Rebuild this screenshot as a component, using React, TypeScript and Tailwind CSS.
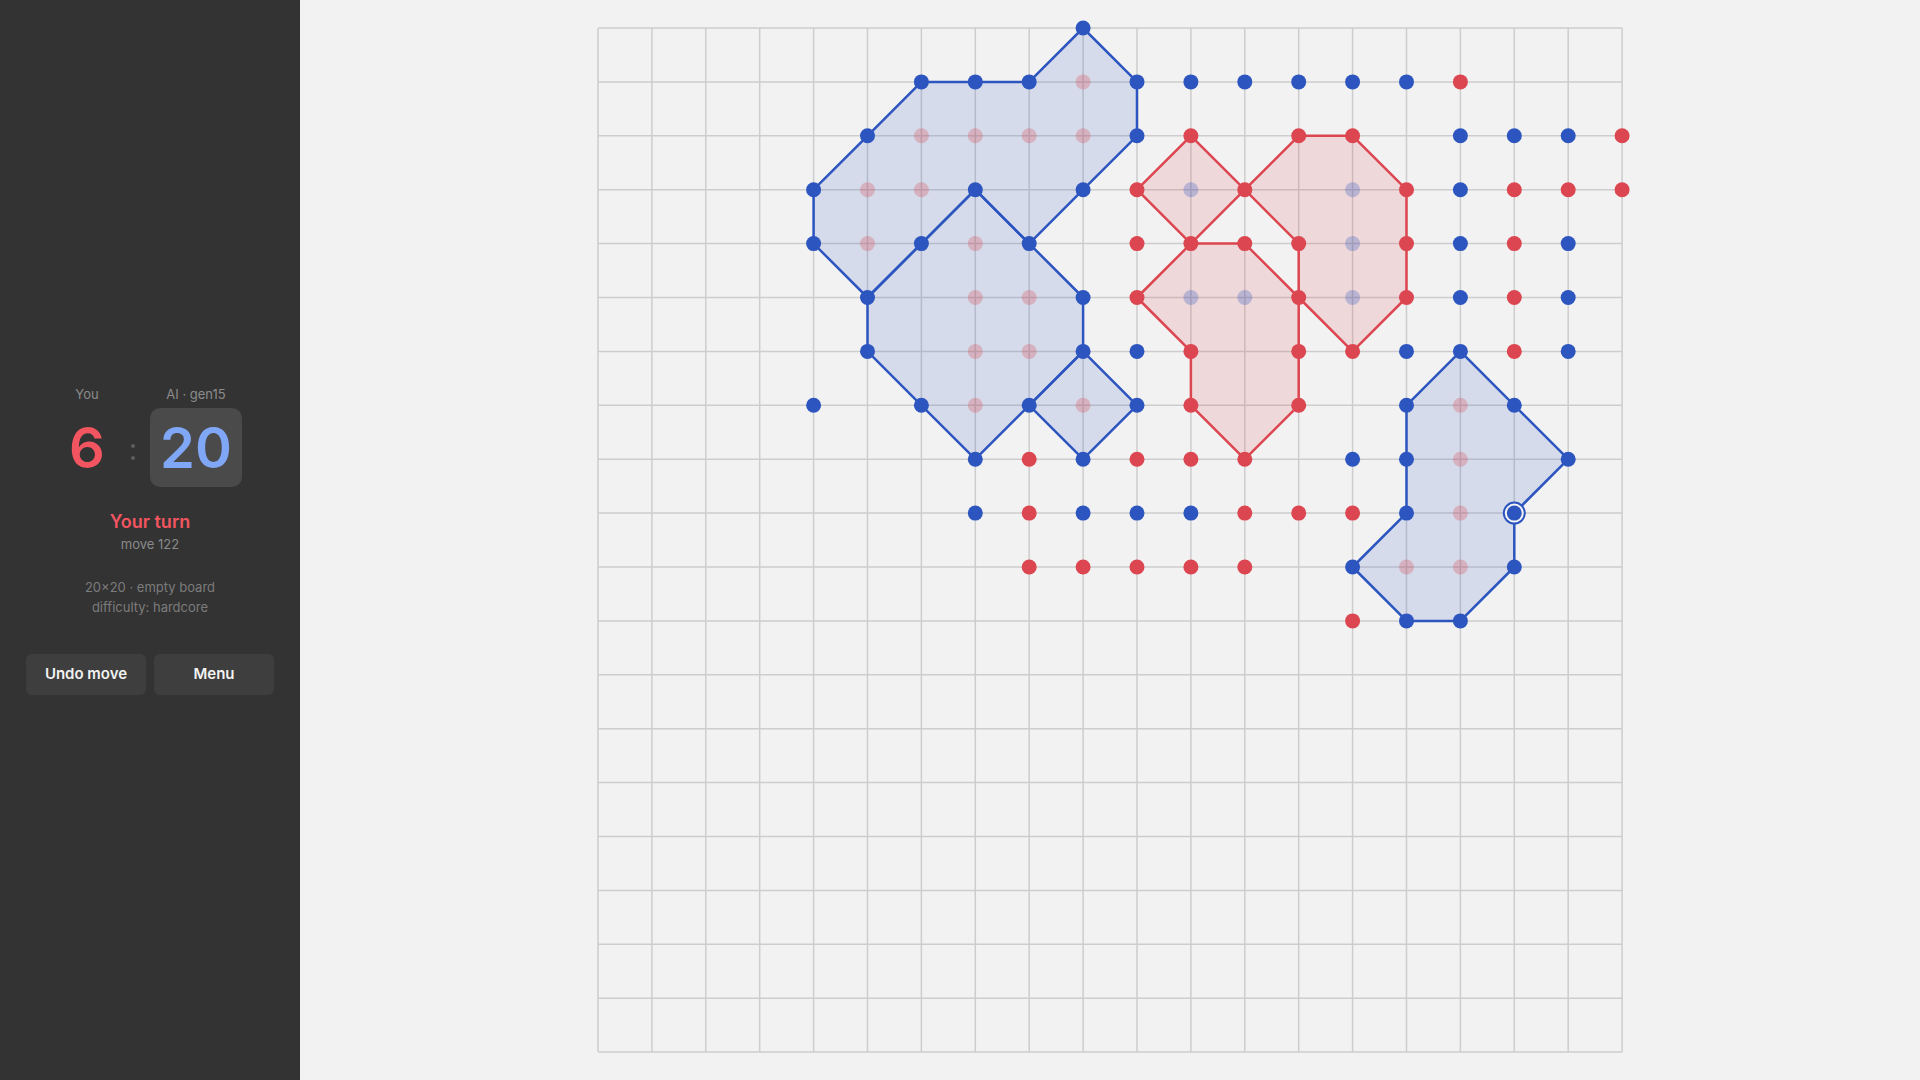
const N = 20;
const CELL = 53.9;
const PAD = 20;
const SIZE = CELL * (N - 1) + PAD * 2;

const BLUE = "#2c55bf";
const RED = "#dc4650";

// b/r = live stones, B/R = captured stones (faded)
const BOARD = [
  ".........b..........",
  "......bbbRbbbbbbr...",
  ".....bRRRRbr.rr.bbbr",
  "....bRRb.brBr.Brbrrr",
  "....bRbRb.rrrrBrbrb.",
  ".....b.RRbrBBrBrbrb.",
  ".....b.RRbbr.rrbbrb.",
  "....b.bRbRbr.r.bRb..",
  ".......brbrrr.bbR.b.",
  ".......brbbbrrrbRb..",
  "........rrrrr.bRRb..",
  "..............rbb...",
];

const LAST_MOVE: [number, number] = [17, 9];

type Pt = [number, number];

const BLUE_AREAS: Pt[][] = [
  [[9, 0], [10, 1], [10, 2], [9, 3], [8, 4], [7, 3], [6, 4], [5, 5], [4, 4], [4, 3], [5, 2], [6, 1], [7, 1], [8, 1]],
  [[7, 3], [8, 4], [9, 5], [9, 6], [8, 7], [7, 8], [6, 7], [5, 6], [5, 5], [6, 4]],
  [[9, 6], [10, 7], [9, 8], [8, 7]],
  [[16, 6], [17, 7], [18, 8], [17, 9], [17, 10], [16, 11], [15, 11], [14, 10], [15, 9], [15, 8], [15, 7]],
];

const RED_AREAS: Pt[][] = [
  [[11, 2], [12, 3], [11, 4], [10, 3]],
  [[13, 2], [14, 2], [15, 3], [15, 4], [15, 5], [14, 6], [13, 5], [13, 4], [12, 3]],
  [[11, 4], [12, 4], [13, 5], [13, 6], [13, 7], [12, 8], [11, 7], [11, 6], [10, 5]],
];

const px = (i: number) => PAD + i * CELL;

function toPoints(pts: Pt[]) {
  return pts.map(([c, r]) => `${px(c)},${px(r)}`).join(" ");
}

function Board() {
  const lines = [];
  for (let i = 0; i < N; i++) {
    lines.push(<line key={`v${i}`} x1={px(i)} y1={px(0)} x2={px(i)} y2={px(N - 1)} />);
    lines.push(<line key={`h${i}`} x1={px(0)} y1={px(i)} x2={px(N - 1)} y2={px(i)} />);
  }

  const stones = [];
  BOARD.forEach((row, r) => {
    row.split("").forEach((ch, c) => {
      if (ch === ".") return;
      const color = ch.toLowerCase() === "b" ? BLUE : RED;
      const faded = ch === "B" || ch === "R";
      stones.push(
        <circle key={`${c}-${r}`} cx={px(c)} cy={px(r)} r={7.5} fill={color} opacity={faded ? 0.28 : 1} />
      );
    });
  });

  return (
    <svg width={SIZE} height={SIZE} viewBox={`0 0 ${SIZE} ${SIZE}`} className="block">
      <g stroke="#cdcdcd" strokeWidth={1.5}>{lines}</g>

      {BLUE_AREAS.map((pts, i) => (
        <polygon
          key={`ba${i}`}
          points={toPoints(pts)}
          fill={BLUE}
          fillOpacity={0.15}
          stroke={BLUE}
          strokeWidth={2.5}
          strokeLinejoin="round"
        />
      ))}
      {RED_AREAS.map((pts, i) => (
        <polygon
          key={`ra${i}`}
          points={toPoints(pts)}
          fill={RED}
          fillOpacity={0.15}
          stroke={RED}
          strokeWidth={2.5}
          strokeLinejoin="round"
        />
      ))}

      <circle cx={px(LAST_MOVE[0])} cy={px(LAST_MOVE[1])} r={10.5} fill="#f4f4f4" stroke={BLUE} strokeWidth={2} />
      {stones}
    </svg>
  );
}

export default function App() {
  return (
    <div className="flex h-screen w-full overflow-hidden bg-[#f2f2f2] font-['Inter',sans-serif]">
      <aside className="flex w-[300px] shrink-0 flex-col items-center justify-center bg-[#333333]">
        <div className="flex items-end">
          <div className="flex flex-col items-center">
            <span className="text-[13px] leading-[18px] text-[#8c8c8c]">You</span>
            <div className="mt-[5px] flex h-[79px] w-[58px] items-center justify-center text-[56px] font-semibold leading-none text-[#f25560]">
              6
            </div>
          </div>
          <div className="flex h-[79px] w-[34px] flex-col items-center justify-center gap-[8px] pt-2">
            <span className="h-[4px] w-[4px] rounded-full bg-[#5e5e5e]" />
            <span className="h-[4px] w-[4px] rounded-full bg-[#5e5e5e]" />
          </div>
          <div className="flex flex-col items-center">
            <span className="text-[13px] leading-[18px] text-[#8c8c8c]">AI · gen15</span>
            <div className="mt-[5px] flex h-[79px] w-[92px] items-center justify-center rounded-[10px] bg-[#4a4a4a] text-[56px] font-semibold leading-none text-[#80a6f6]">
              20
            </div>
          </div>
        </div>

        <p className="mt-[22px] text-[18px] font-semibold leading-[26px] text-[#f25560]">Your turn</p>
        <p className="text-[13px] leading-[18px] text-[#8a8a8a]">move 122</p>

        <div className="mt-[24px] text-center text-[13px] leading-[20px] text-[#7c7c7c]">
          <p>20×20 · empty board</p>
          <p>difficulty: hardcore</p>
        </div>

        <div className="mt-[37px] flex gap-2">
          <button type="button" className="h-[41px] w-[120px] rounded-md bg-[#3e3e3e] text-[15px] font-semibold text-[#f2f2f2]">
            Undo move
          </button>
          <button type="button" className="h-[41px] w-[120px] rounded-md bg-[#3e3e3e] text-[15px] font-semibold text-[#f2f2f2]">
            Menu
          </button>
        </div>
      </aside>

      <main className="flex flex-1 items-center justify-center">
        <Board />
      </main>
    </div>
  );
}
